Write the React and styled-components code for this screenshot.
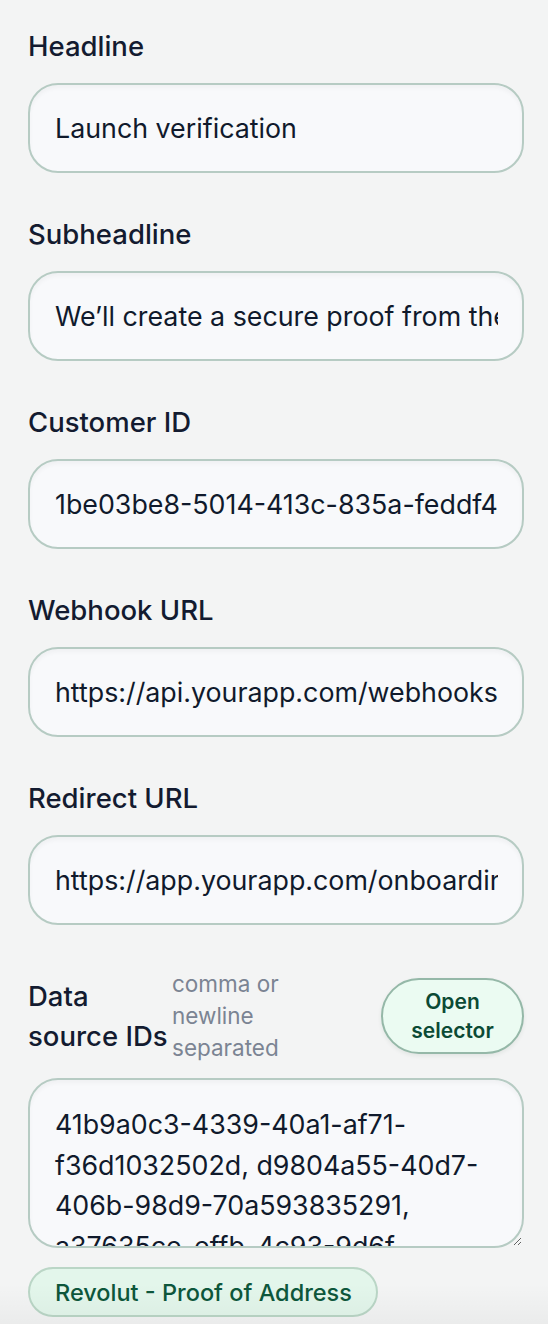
import React, { useState } from "react";
import styled, { createGlobalStyle } from "styled-components";

const GlobalStyle = createGlobalStyle`
  html, body {
    margin: 0;
    padding: 0;
    background: #f3f4f4;
  }
  body {
    font-family: Inter, "Noto Sans", "Liberation Sans", sans-serif;
    -webkit-font-smoothing: antialiased;
  }
  * {
    box-sizing: border-box;
  }
`;

const Panel = styled.div`
  width: 548px;
  height: 1324px;
  overflow: hidden;
  padding: 28px 24px 0 28px;
  background: #f3f4f4;
  position: relative;
`;

const Form = styled.form`
  display: flex;
  flex-direction: column;
  gap: 43px;
`;

const Field = styled.div`
  display: flex;
  flex-direction: column;
`;

const Label = styled.label`
  display: block;
  font-size: 27.5px;
  line-height: 36px;
  font-weight: 500;
  color: #131b30;
  margin-bottom: 19px;
`;

const Input = styled.input`
  width: 100%;
  height: 90px;
  padding: 0 24px 0 25px;
  border: 2px solid #b6cbc3;
  border-radius: 30px;
  background: #f8f9fb;
  box-shadow: inset 0 3px 4px rgba(20, 40, 30, 0.035);
  font-family: inherit;
  font-size: 26.8px;
  color: #101a2c;
  outline: none;
`;

const HeaderRow = styled.div`
  display: flex;
  align-items: center;
  justify-content: space-between;
  margin-bottom: 14px;
`;

const LabelGroup = styled.div`
  display: flex;
  align-items: center;
  gap: 2px;
`;

const RowLabel = styled.span`
  max-width: 142px;
  font-size: 27.5px;
  line-height: 40px;
  font-weight: 500;
  color: #131b30;
`;

const Hint = styled.span`
  max-width: 124px;
  font-size: 22.5px;
  line-height: 32px;
  color: #7b8493;
`;

const SelectorButton = styled.button`
  width: 143px;
  height: 76px;
  padding: 0 14px;
  border: 2px solid #95b8a8;
  border-radius: 40px;
  background: #ebfbf2;
  box-shadow: 0 2px 4px rgba(20, 60, 40, 0.08);
  font-family: inherit;
  font-size: 21px;
  line-height: 29px;
  font-weight: 600;
  color: #0b4a35;
  cursor: pointer;
`;

const TextArea = styled.textarea`
  width: 100%;
  height: 170px;
  padding: 24px 24px 0 25px;
  border: 2px solid #b6cbc3;
  border-radius: 30px;
  background: #f8f9fb;
  box-shadow: inset 0 3px 4px rgba(20, 40, 30, 0.035);
  font-family: inherit;
  font-size: 26.8px;
  line-height: 40.5px;
  color: #101a2c;
  outline: none;
  resize: vertical;
  scrollbar-width: none;
  &::-webkit-scrollbar {
    display: none;
  }
`;

const ChipList = styled.div`
  display: flex;
  flex-wrap: wrap;
  gap: 10px;
  margin-top: 19px;
`;

const Chip = styled.span`
  display: inline-flex;
  align-items: center;
  height: 50px;
  padding: 0 24px 0 25px;
  border: 2px solid #bad6c6;
  border-radius: 25px;
  background: #e3f6eb;
  font-size: 23.5px;
  font-weight: 500;
  color: #0d573b;
`;

const BottomFade = styled.div`
  position: absolute;
  left: 0;
  right: 0;
  bottom: 0;
  height: 40px;
  pointer-events: none;
  background: linear-gradient(rgba(0, 0, 0, 0), rgba(0, 0, 0, 0.035));
`;

const fields = [
  { id: "headline", label: "Headline", value: "Launch verification" },
  {
    id: "subheadline",
    label: "Subheadline",
    value: "We’ll create a secure proof from the account you connect.",
  },
  {
    id: "customer",
    label: "Customer ID",
    value: "1be03be8-5014-413c-835a-feddf4a9c217",
  },
  {
    id: "webhook",
    label: "Webhook URL",
    value: "https://api.yourapp.com/webhooks/verification",
  },
  {
    id: "redirect",
    label: "Redirect URL",
    value: "https://app.yourapp.com/onboarding/complete",
  },
];

const App = () => {
  const [values, setValues] = useState(
    Object.fromEntries(fields.map((f) => [f.id, f.value]))
  );
  const [sources, setSources] = useState(
    "41b9a0c3-4339-40a1-af71-f36d1032502d, d9804a55-40d7-406b-98d9-70a593835291, a37635ce-effb-4c93-9d6f-2c8e1b7a4f06"
  );

  return (
    <>
      <GlobalStyle />
      <Panel>
        <Form onSubmit={(e) => e.preventDefault()}>
          {fields.map((f) => (
            <Field key={f.id}>
              <Label htmlFor={f.id}>{f.label}</Label>
              <Input
                id={f.id}
                value={values[f.id]}
                onChange={(e) =>
                  setValues({ ...values, [f.id]: e.target.value })
                }
              />
            </Field>
          ))}

          <Field>
            <HeaderRow>
              <LabelGroup>
                <RowLabel>Data source IDs</RowLabel>
                <Hint>comma or newline separated</Hint>
              </LabelGroup>
              <SelectorButton type="button">Open selector</SelectorButton>
            </HeaderRow>
            <TextArea
              value={sources}
              onChange={(e) => setSources(e.target.value)}
            />
            <ChipList>
              <Chip>Revolut - Proof of Address</Chip>
            </ChipList>
          </Field>
        </Form>
        <BottomFade />
      </Panel>
    </>
  );
};

export default App;
